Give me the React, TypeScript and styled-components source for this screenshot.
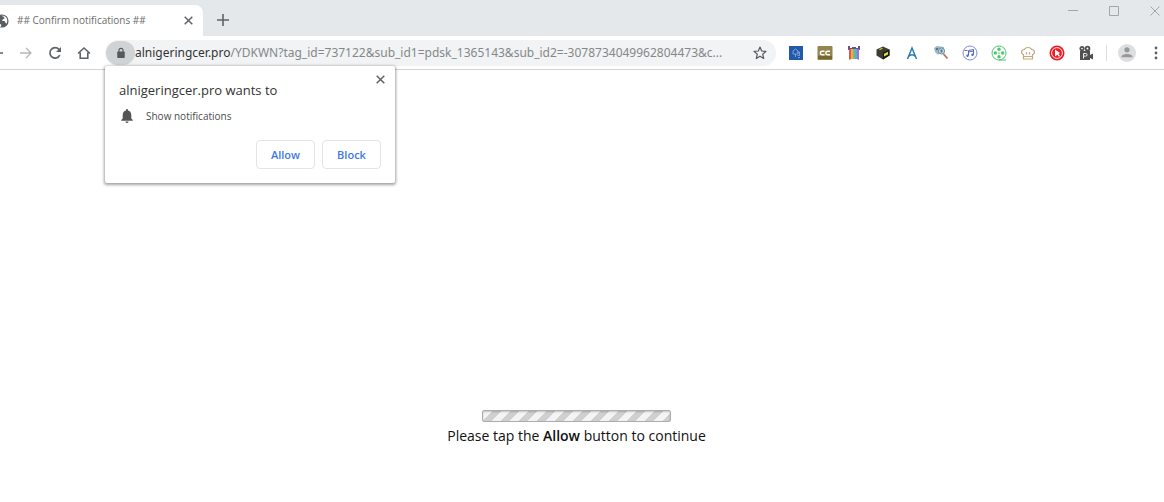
import React from "react";
import styled, { createGlobalStyle } from "styled-components";

const GlobalStyle = createGlobalStyle`
  * { box-sizing: border-box; }
  body {
    margin: 0;
    background: #fff;
    color: #333;
    font-family: "Open Sans", "Noto Sans", sans-serif;
    overflow-x: hidden;
  }
  button, input { font: inherit; }
  svg { display: block; flex: none; }
`;

const Browser = styled.div`
  position: relative;
  min-height: 100vh;
  overflow: hidden;
`;

const TabStrip = styled.header`
  display: flex;
  height: 36px;
  padding-top: 5px;
  background: #e4e8eb;
`;

const Tab = styled.div`
  display: flex;
  align-items: center;
  width: 203px;
  padding-right: 7px;
  background: #fff;
  border-radius: 0 8px 0 0;
`;

const TabIcon = styled.span`
  margin-left: -5px;
`;

const TabTitle = styled.span`
  flex: 1;
  margin-left: 8px;
  padding-bottom: 2px;
  font-size: 10px;
  line-height: 16px;
  color: #6c6c6c;
  white-space: nowrap;
`;

const IconButton = styled.button<{ $width?: number }>`
  display: flex;
  align-items: center;
  justify-content: center;
  flex: none;
  width: ${(p) => p.$width ?? 29}px;
  height: 24px;
  padding: 0;
  border: 0;
  background: none;
  color: #5f6368;
`;

const NewTab = styled(IconButton)`
  margin: 3px 0 0 5px;
`;

const WindowControls = styled.div`
  display: flex;
  margin: -6px -11px 0 auto;
`;

const Toolbar = styled.nav`
  display: flex;
  align-items: center;
  height: 34px;
  padding-right: 1px;
  border-bottom: 1px solid #d2d4d4;
  background: #fff;
`;

const NavButtons = styled.div`
  display: flex;
  margin-left: -18px;
`;

const AddressBar = styled.div`
  display: flex;
  align-items: center;
  flex: 1;
  min-width: 0;
  height: 26px;
  margin: 0 5px 0 7px;
  padding-right: 2px;
  border-radius: 13px;
  background: #f1f3f4;
`;

const LockButton = styled(IconButton)`
  margin-left: 1px;
  border-radius: 12px;
  background: #d0d3d5;
`;

const Address = styled.label`
  display: flex;
  flex: 1;
  min-width: 0;
  font-family: "Noto Sans", "Open Sans", sans-serif;
  font-size: 12px;
  line-height: 20px;
  color: #333;
`;

const AddressInput = styled.input`
  flex: 1;
  min-width: 0;
  height: 20px;
  padding: 0;
  border: 0;
  outline: 0;
  background: none;
  color: #85888a;
  text-overflow: ellipsis;
`;

const Divider = styled.span`
  width: 1px;
  height: 16px;
  margin: 0 5px 0 6px;
  background: #dcdee0;
`;

const Prompt = styled.section`
  position: absolute;
  top: 66px;
  left: 105px;
  width: 290px;
  padding: 14px;
  border-radius: 2px;
  background: #fff;
  box-shadow: 0 1px 3px 1px rgba(0, 0, 0, 0.36);
`;

const ClosePrompt = styled(IconButton)`
  position: absolute;
  top: 1px;
  right: 0;
`;

const PromptTitle = styled.h1`
  margin: 0;
  font-size: 13px;
  font-weight: 400;
  line-height: 20px;
  color: #333;
`;

const Permission = styled.p`
  display: flex;
  align-items: center;
  gap: 11px;
  margin: 8px 0 16px;
  font-size: 10px;
  line-height: 16px;
  color: #4c4c4c;
`;

const PromptActions = styled.div`
  display: flex;
  justify-content: flex-end;
  gap: 7px;
`;

const ActionButton = styled.button`
  width: 59px;
  height: 29px;
  padding: 0 0 1px;
  border: 1px solid #e2e4e6;
  border-radius: 4px;
  background: #fff;
  color: #4079e0;
  font-size: 11px;
  font-weight: 600;
`;

const Page = styled.main`
  display: flex;
  flex-direction: column;
  align-items: center;
  padding: 340px 11px 24px 0;
`;

const Progress = styled.div`
  width: 189px;
  height: 12px;
  border: 1px solid #adadad;
  border-radius: 2px;
  background: linear-gradient(135deg, #f4f4f4 25%, #d0d0d0 25% 50%, #f4f4f4 50% 75%, #d0d0d0 75%) 0 0 / 18px 18px;
  box-shadow: inset 0 1px 2px rgba(0, 0, 0, 0.2);
`;

const Message = styled.p`
  margin: 4px 0 0;
  font-size: 14px;
  line-height: 20px;
  color: #111;

  b { font-weight: 600; }
`;

const Close = () => (
  <svg width="9" height="9" viewBox="0 0 9 9" fill="none" stroke="currentColor" strokeWidth="1.500">
    <path d="M.7.7l7.600 7.600M8.300.7L.7 8.300" />
  </svg>
);

const Icon = ({ children, size = 16 }: { children: React.ReactNode; size?: number }) => (
  <svg width={size} height={size} viewBox="0 0 16 16" fill="none" aria-hidden="true">
    {children}
  </svg>
);

const extensions: { name: string; art: React.ReactNode }[] = [
  {
    name: "Blueprint",
    art: (
      <>
        <path fill="#2459a9" d="M1 1h14v14H1z" />
        <path stroke="#8fb4e5" strokeWidth=".8" d="M5 9V6l2.500-2L10 6v3H5M7.500 9v3M9 7h2.500v3.500H9.500M10 12.500h2" />
      </>
    ),
  },
  {
    name: "Captions",
    art: (
      <>
        <rect x=".5" y="1" width="15" height="14" rx="1" fill="#95844c" />
        <path fill="#75672f" d="M1 11h14v3H1z" />
        <path stroke="#fff" strokeWidth="1.500" d="M7.500 6.300H5a1.700 1.700 0 000 3.400h2.500M13 6.300h-2.500a1.700 1.700 0 000 3.400H13" />
      </>
    ),
  },
  {
    name: "Rainbow",
    art: (
      <>
        <path fill="#6a4d94" d="M2 1h2v2h2V2h4v1h2V1h2v4H2z" />
        <path fill="#e8534c" d="M3 4h2v10l-2 1z" />
        <path fill="#f6aa3d" d="M5 4h2v10H5z" />
        <path fill="#6cc466" d="M7 4h2v10H7z" />
        <path fill="#55ade8" d="M9 4h2v10H9z" />
        <path fill="#a06ed0" d="M11 4h2v11l-2-1z" />
      </>
    ),
  },
  {
    name: "Box",
    art: (
      <>
        <path fill="#3c3b34" d="M8 1.500l6.500 3v6L8 14.500l-6.500-4v-6z" />
        <path fill="#1a1a18" d="M8 7.500l6.500-3v6L8 14.500z" />
        <path fill="#e8df25" d="M9 8.800l4-2v2.600l-4 2zM4 4.300l3-1.400 1 .5-3 1.500z" />
      </>
    ),
  },
  {
    name: "Letter A",
    art: <path stroke="#2c7fae" strokeWidth="1.500" d="M3.500 14L8 3l4.500 11M4.500 11.500C7 9 9 9 11.500 11.500" />,
  },
  {
    name: "Image search",
    art: (
      <>
        <path fill="#9db6c2" d="M1 3l3-2 7 1 .5 6-7 1.500L2 7z" />
        <circle cx="8.500" cy="6" r="3" fill="#cfe2eb" stroke="#6d8b9b" />
        <path fill="#4b7890" d="M3 3h2v2H3zM7.500 4.500h2v3h-2z" />
        <path stroke="#ad7657" strokeWidth="1.800" d="M10.500 9l4 4.500" />
      </>
    ),
  },
  {
    name: "Music",
    art: (
      <>
        <circle cx="8" cy="8" r="7" stroke="#7d8cd4" />
        <path stroke="#5168c2" d="M6.500 10.500v-5l5-1v5M6.500 7l5-1M2.500 5.500h3" />
        <circle cx="5.500" cy="10.800" r="1.200" fill="#5168c2" />
        <circle cx="10.500" cy="9.800" r="1.200" fill="#5168c2" />
      </>
    ),
  },
  {
    name: "Film reel",
    art: (
      <>
        <circle cx="8" cy="8" r="7" stroke="#4dc76d" />
        <path stroke="#4dc76d" d="M8 15h7" />
        <g fill="#4dc76d">
          <circle cx="8" cy="4.300" r="1.700" />
          <circle cx="4.300" cy="8" r="1.700" />
          <circle cx="11.700" cy="8" r="1.700" />
          <circle cx="8" cy="11.700" r="1.700" />
          <circle cx="8" cy="8" r=".8" />
        </g>
      </>
    ),
  },
  {
    name: "Recipes",
    art: (
      <path
        stroke="#c2a982"
        strokeWidth="1.200"
        d="M3.500 9.500C.8 9 .8 4.500 4.500 4.500 5 1.800 11 1.800 11.500 4.500c3.700 0 3.700 4.500 1 5V14h-9zM3.500 11.500h9M6.500 9.500V7M9.500 9.500V7"
      />
    ),
  },
  {
    name: "Video player",
    art: (
      <>
        <circle cx="8" cy="8" r="7.500" fill="#ec1c24" />
        <circle cx="8" cy="8" r="5.400" stroke="#fff" strokeWidth=".9" />
        <path fill="#fff" d="M6 4.500l5 3.500-1.500 1 1.500 2-1 .8-1.600-2L6 11.500z" />
      </>
    ),
  },
  {
    name: "Movie camera",
    art: (
      <>
        <circle cx="4" cy="3.500" r="1.700" stroke="#505050" strokeWidth="1.700" />
        <circle cx="9.500" cy="3.500" r="1.900" stroke="#505050" strokeWidth="1.900" />
        <path fill="#505050" d="M2 6h10v9H2zM12 10l3-1.500v6L12 13z" />
        <path stroke="#eee" d="M5.500 13.500v-5h2.300a1.300 1.300 0 010 2.600H5.500" />
      </>
    ),
  },
];

export default function App() {
  return (
    <>
      <GlobalStyle />
      <Browser>
        <TabStrip>
          <Tab>
            <TabIcon>
              <Icon size={14}>
                <circle cx="8" cy="8" r="7.500" fill="#5a5e62" />
                <path fill="#fff" d="M2 6l3 3v2l2 1v2.500C3 14 1 10 2 6zM7 2l3 1 1 2-2 1-1 2h3l1 2 1 1c2-3 1-7-2-8.500L10 2z" />
              </Icon>
            </TabIcon>
            <TabTitle>## Confirm notifications ##</TabTitle>
            <IconButton $width={16} aria-label="Close tab">
              <Close />
            </IconButton>
          </Tab>
          <NewTab aria-label="New tab">
            <svg width="12" height="12" viewBox="0 0 12 12" stroke="currentColor" strokeWidth="1.600">
              <path d="M6 0v12M0 6h12" />
            </svg>
          </NewTab>
          <WindowControls>
            <IconButton $width={41} aria-label="Minimize">
              <svg width="10" height="10" stroke="#a2a6a8"><path d="M0 4.500h10" /></svg>
            </IconButton>
            <IconButton $width={41} aria-label="Maximize">
              <svg width="10" height="10" fill="none" stroke="#a2a6a8"><path d="M.5.5h9v9h-9z" /></svg>
            </IconButton>
            <IconButton $width={41} aria-label="Close window">
              <svg width="10" height="10" stroke="#a2a6a8"><path d="M.5.5l9 9M9.500.5l-9 9" /></svg>
            </IconButton>
          </WindowControls>
        </TabStrip>

        <Toolbar aria-label="Browser toolbar">
          <NavButtons>
            <IconButton aria-label="Back">
              <Icon><path stroke="#5f6368" strokeWidth="1.500" d="M14 8H3M8 2.500L2.500 8 8 13.500" /></Icon>
            </IconButton>
            <IconButton aria-label="Forward">
              <Icon><path stroke="#b5b8ba" strokeWidth="1.300" d="M2 8h11M8 3l5 5-5 5" /></Icon>
            </IconButton>
            <IconButton aria-label="Reload">
              <Icon>
                <path stroke="#5f6368" strokeWidth="1.700" d="M12.800 10.200A5.200 5.200 0 1112 4.400" />
                <path fill="#5f6368" d="M14 2v5H9z" />
              </Icon>
            </IconButton>
            <IconButton aria-label="Home">
              <Icon><path stroke="#5f6368" strokeWidth="1.600" d="M2 8.500L8 3l6 5.500M4.200 7.500v5.800h7.600V7.500" /></Icon>
            </IconButton>
          </NavButtons>
          <AddressBar>
            <LockButton aria-label="View site information">
              <Icon size={12}>
                <rect x="3" y="6" width="10" height="8.500" rx="1" fill="#55595c" />
                <path stroke="#55595c" strokeWidth="1.500" d="M5.300 7V4.500a2.700 2.700 0 015.400 0V7" />
              </Icon>
            </LockButton>
            <Address>
              <span>alnigeringcer.pro</span>
              <AddressInput
                aria-label="Address"
                readOnly
                value="/YDKWN?tag_id=737122&sub_id1=pdsk_1365143&sub_id2=-3078734049962804473&c..."
              />
            </Address>
            <IconButton aria-label="Bookmark this page">
              <Icon>
                <path
                  stroke="#55595c"
                  strokeWidth="1.200"
                  strokeLinejoin="round"
                  d="M8 2l1.700 4 4.300.4-3.300 2.800 1 4.300L8 11.200l-3.700 2.300 1-4.300L2 6.400 6.300 6z"
                />
              </Icon>
            </IconButton>
          </AddressBar>
          {extensions.map((extension) => (
            <IconButton key={extension.name} aria-label={extension.name}>
              <Icon>{extension.art}</Icon>
            </IconButton>
          ))}
          <Divider />
          <IconButton aria-label="Profile">
            <Icon size={18}>
              <circle cx="8" cy="8" r="8" fill="#dcdee0" />
              <circle cx="8" cy="5.200" r="2.300" fill="#96999b" />
              <path fill="#96999b" d="M3 11.800C3 8 13 8 13 11.800z" />
            </Icon>
          </IconButton>
          <IconButton $width={22} aria-label="Browser menu">
            <Icon>
              <g fill="#5f6368">
                <circle cx="12" cy="3" r="1.400" />
                <circle cx="12" cy="8" r="1.400" />
                <circle cx="12" cy="13" r="1.400" />
              </g>
            </Icon>
          </IconButton>
        </Toolbar>

        <Page>
          <Progress role="progressbar" aria-label="Loading" />
          <Message>
            Please tap the <b>Allow</b> button to continue
          </Message>
        </Page>

        <Prompt role="dialog" aria-labelledby="prompt-title">
          <ClosePrompt aria-label="Close prompt">
            <Close />
          </ClosePrompt>
          <PromptTitle id="prompt-title">alnigeringcer.pro wants to</PromptTitle>
          <Permission>
            <Icon>
              <path
                fill="#555"
                d="M8 15a1.500 1.500 0 001.500-1.500h-3A1.500 1.500 0 008 15zM12.300 10.500V7c0-2.200-1.200-4-3.300-4.500V2a1 1 0 00-2 0v.5C4.900 3 3.700 4.800 3.700 7v3.500L2.200 12v.8h11.600V12z"
              />
            </Icon>
            Show notifications
          </Permission>
          <PromptActions>
            <ActionButton>Allow</ActionButton>
            <ActionButton>Block</ActionButton>
          </PromptActions>
        </Prompt>
      </Browser>
    </>
  );
}
